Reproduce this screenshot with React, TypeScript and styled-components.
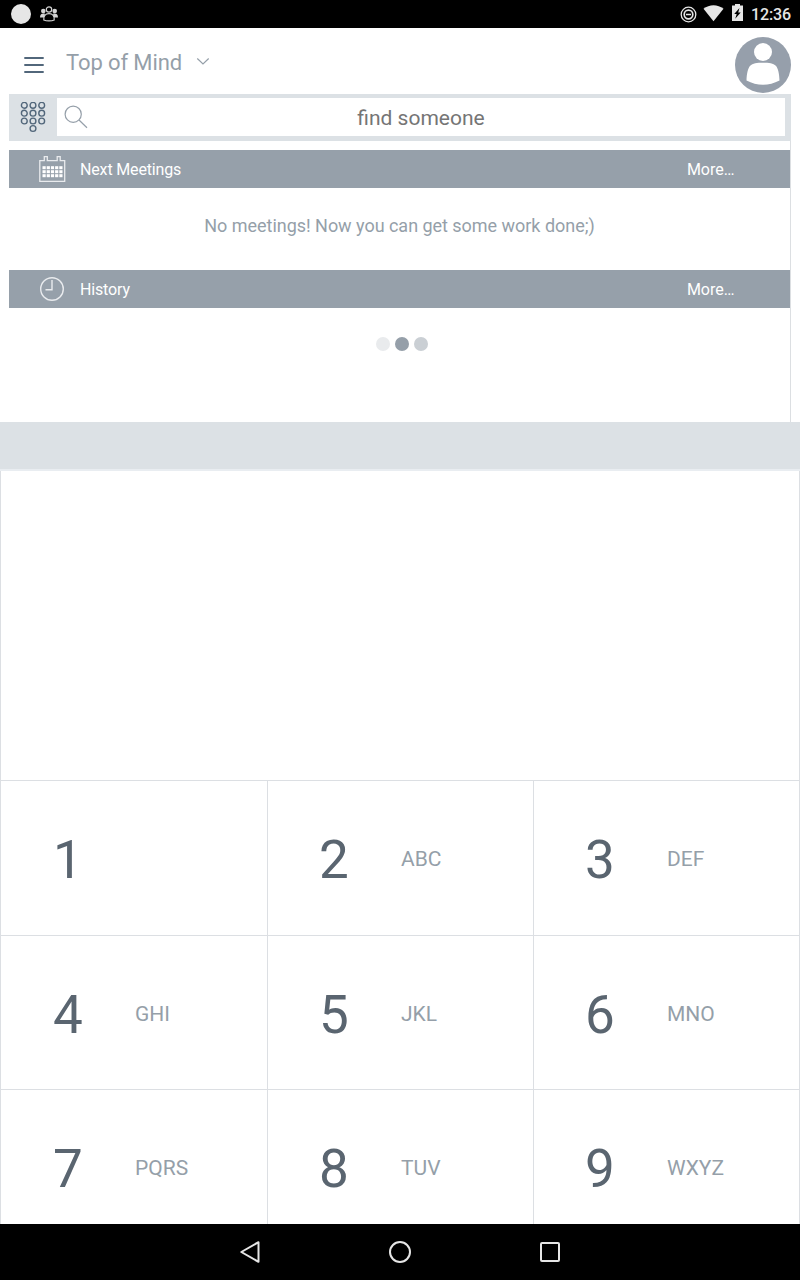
import React from "react";
import styled, { createGlobalStyle } from "styled-components";

const GlobalStyle = createGlobalStyle`
  * { box-sizing: border-box; }
  html, body { margin: 0; padding: 0; background: #fff; overflow: hidden; }
  body { font-family: Roboto, "Liberation Sans", sans-serif; }
  svg { display: block; flex: none; }
`;

const Screen = styled.div`
  width: 800px;
  height: 1280px;
  display: flex;
  flex-direction: column;
  background: #fff;
  overflow: hidden;
`;

const StatusBar = styled.div`
  flex: none;
  height: 28px;
  display: flex;
  justify-content: space-between;
  background: #000;
`;

const Clock = styled.span`
  font-size: 16px;
  font-weight: 500;
  letter-spacing: -0.15px;
  line-height: 29px;
  color: #e6e6e6;
  width: 49px;
`;

const StatusGroup = styled.div`
  display: flex;
`;

const Header = styled.header`
  flex: none;
  height: 66px;
  display: flex;
  padding: 9px 9px 0 24px;
`;

const MenuButton = styled.div`
  width: 42px;
  padding-top: 19px;
`;

const Title = styled.h1`
  margin: 0;
  width: 129px;
  font-size: 22px;
  font-weight: 400;
  letter-spacing: -0.1px;
  line-height: 26px;
  padding-top: 13px;
  color: #959fa9;
  white-space: nowrap;
`;

const Chevron = styled.div`
  padding-top: 20px;
`;

const Avatar = styled.div`
  margin-left: auto;
`;

const Content = styled.main`
  flex: none;
  height: 328px;
  width: 782px;
  margin-left: 9px;
  display: flex;
  flex-direction: column;
`;

const SearchBar = styled.div`
  height: 47px;
  flex: none;
  display: flex;
  padding: 4px 6px 5px 0;
  background: #dce1e5;
`;

const DialToggle = styled.div`
  width: 48px;
  padding: 4px 0 0 11px;
`;

const SearchField = styled.div`
  flex: 1;
  display: flex;
  padding: 7px 0 0 7px;
  background: #fff;
`;

const Placeholder = styled.span`
  flex: 1;
  margin-right: 31px;
  margin-top: 1px;
  text-align: center;
  font-size: 21px;
  line-height: 24px;
  color: #757575;
`;

const Feed = styled.div`
  flex: 1;
  padding-top: 9px;
  border-right: 1px solid #dcdfe2;
`;

const SectionBar = styled.div`
  height: 38px;
  display: flex;
  align-items: center;
  padding: 0 56px 0 30px;
  background: #96a0aa;
  color: #fff;
  font-size: 16px;
  line-height: 36px;
`;

const SectionTitle = styled.span`
  margin-left: 14px;
  padding-top: 2px;
  letter-spacing: -0.15px;
`;

const More = styled.span`
  margin-left: auto;
  padding-top: 2px;
`;

const Ellipsis = styled.span`
  letter-spacing: -0.8px;
`;

const EmptyMessage = styled.p`
  margin: 0;
  height: 82px;
  line-height: 76px;
  text-align: center;
  font-size: 18px;
  letter-spacing: -0.03px;
  color: #959fa9;
`;

const Loader = styled.div`
  display: flex;
  gap: 5px;
  padding: 29px 0 0 367px;
`;

const Dot = styled.i<{ $color: string }>`
  width: 14px;
  height: 14px;
  border-radius: 50%;
  background: ${(p) => p.$color};
`;

const Band = styled.div`
  flex: none;
  height: 49px;
  background: #dce1e5;
  border-bottom: 2px solid #e9edf1;
`;

const Dialer = styled.section`
  flex: 1;
  min-height: 0;
  display: flex;
  flex-direction: column;
  border: solid #dcdfe3;
  border-width: 0 1px;
  overflow: hidden;
`;

const NumberDisplay = styled.div`
  flex: none;
  height: 309px;
`;

const KeyGrid = styled.div`
  display: grid;
  grid-template-columns: 266px 266px 266px;
  grid-template-rows: 155px 154px 154px;
`;

const Key = styled.div<{ $last: boolean }>`
  display: grid;
  grid-template-columns: 133px 1fr;
  border-top: 1px solid #dcdfe3;
  border-right: ${(p) => (p.$last ? "0" : "1px solid #dcdfe3")};
  width: ${(p) => (p.$last ? "266px" : "267px")};
`;

const Digit = styled.span`
  text-align: center;
  font-size: 53px;
  line-height: 64px;
  padding: 47px 0 0 1px;
  color: #5a6570;
`;

const Letters = styled.span`
  padding: 65px 0 0 1px;
  font-size: 21px;
  line-height: 26px;
  color: #959fa9;
`;

const NavBar = styled.nav`
  flex: none;
  height: 56px;
  display: flex;
  justify-content: center;
  align-items: center;
  gap: 126px;
  background: #000;
`;

const keys = [
  ["1", ""], ["2", "ABC"], ["3", "DEF"],
  ["4", "GHI"], ["5", "JKL"], ["6", "MNO"],
  ["7", "PQRS"], ["8", "TUV"], ["9", "WXYZ"],
];

const NotificationIcons = () => (
  <svg width="70" height="28" fill="none">
    <circle cx="21" cy="14" r="10" fill="#e6e6e6" />
    <g fill="#d4d4d4">
      <circle cx="43.3" cy="11" r="2.3" />
      <circle cx="54.7" cy="11" r="2.3" />
      <path d="M40 17.5c0-2.7 1.2-4 3.3-4h1.5v4zM58 17.5c0-2.7-1.2-4-3.3-4h-1.5v4z" />
    </g>
    <circle cx="49" cy="9.5" r="2.7" fill="#000" stroke="#d4d4d4" strokeWidth="1.2" />
    <path d="M43.8 20c-.5-4 1.5-6.3 5.2-6.3s5.7 2.3 5.2 6.3c-2.7 1.3-7.7 1.3-10.4 0z" fill="#000" stroke="#d4d4d4" strokeWidth="1.2" />
  </svg>
);

const SystemIcons = () => (
  <svg width="72" height="28" fill="none">
    <circle cx="9.5" cy="14.5" r="7.3" stroke="#e6e6e6" strokeWidth="1.3" />
    <circle cx="9.5" cy="14.5" r="4.3" stroke="#e6e6e6" strokeWidth="1.7" />
    <path d="M7 14.5h5" stroke="#e6e6e6" strokeWidth="1.5" />
    <path d="M24.500 8.800c5.800-4.800 14.200-4.800 20 0L34.500 21.300z" fill="#e6e6e6" />
    <path d="M56 4h5v1.500h3V21H53V5.500h3z" fill="#e6e6e6" />
    <path d="M60.500 8l-5.300 6h2.500l-1.500 4.700 5.500-6.200h-2.500z" fill="#000" />
  </svg>
);

const MenuIcon = () => (
  <svg width="20" height="18" stroke="#52677b" strokeWidth="2">
    <path d="M.3 2h19.4M.3 9h19.4M.3 16h19.4" />
  </svg>
);

const ChevronIcon = () => (
  <svg width="16" height="9" fill="none" stroke="#959fa9" strokeWidth="1.2">
    <path d="M2.300 1.500L8 7l5.700-5.500" />
  </svg>
);

const AvatarIcon = () => (
  <svg width="56" height="56" fill="#fff">
    <circle cx="28" cy="28" r="28" fill="#969fab" />
    <circle cx="28" cy="15" r="9" />
    <path d="M11.500 43.500c.3-7 1.300-12 3.700-14.700C17.600 26 22 25.700 28 25.700s10.400.3 12.800 3.100c2.400 2.700 3.400 7.700 3.700 14.700C34 49.200 22 49.200 11.500 43.500z" />
  </svg>
);

const DialpadIcon = () => (
  <svg width="26" height="32" fill="none" stroke="#52677b" strokeWidth="1.4">
    {[3.3, 11.2, 19].flatMap((y) =>
      [4.3, 13, 21.7].map((x) => <circle key={`${x}-${y}`} cx={x} cy={y} r="2.9" />)
    )}
    <circle cx="13" cy="26.500" r="2.9" />
  </svg>
);

const SearchIcon = () => (
  <svg width="24" height="24" fill="none" stroke="#959fa9" strokeWidth="1.2">
    <circle cx="9.2" cy="9.200" r="8.1" />
    <path d="M15 15l8 7.700" />
  </svg>
);

const CalendarIcon = () => (
  <svg width="27" height="28" fill="none" stroke="#e9ebee" strokeWidth="1.3">
    <path d="M.8 26.300V5.700h4.500V1.700h3v4h9.900v-4h3v4h4.500v20.600z" />
    <g fill="#fff" stroke="none">
      {[11.2, 15.2, 19.2].flatMap((y) =>
        [3.5, 7.7, 11.9, 16.1, 20.3].map((x) => (
          <rect key={`${x}-${y}`} x={x} y={y} width="3.2" height="3" />
        ))
      )}
    </g>
  </svg>
);

const ClockIcon = () => (
  <svg width="27" height="26" fill="none" stroke="#e9ebee" strokeWidth="1.4">
    <circle cx="13" cy="13" r="11.3" />
    <path d="M13 4v9.700H6.500" />
  </svg>
);

export default function App() {
  return (
    <Screen>
      <GlobalStyle />
      <StatusBar>
        <NotificationIcons />
        <StatusGroup>
          <SystemIcons />
          <Clock>12:36</Clock>
        </StatusGroup>
      </StatusBar>
      <Header>
        <MenuButton><MenuIcon /></MenuButton>
        <Title>Top of Mind</Title>
        <Chevron><ChevronIcon /></Chevron>
        <Avatar><AvatarIcon /></Avatar>
      </Header>
      <Content>
        <SearchBar>
          <DialToggle><DialpadIcon /></DialToggle>
          <SearchField>
            <SearchIcon />
            <Placeholder>find someone</Placeholder>
          </SearchField>
        </SearchBar>
        <Feed>
          <SectionBar>
            <CalendarIcon />
            <SectionTitle>Next Meetings</SectionTitle>
            <More>More<Ellipsis>...</Ellipsis></More>
          </SectionBar>
          <EmptyMessage>No meetings! Now you can get some work done;)</EmptyMessage>
          <SectionBar>
            <ClockIcon />
            <SectionTitle>History</SectionTitle>
            <More>More<Ellipsis>...</Ellipsis></More>
          </SectionBar>
          <Loader>
            <Dot $color="#e9ebed" />
            <Dot $color="#959fa9" />
            <Dot $color="#cacfd4" />
          </Loader>
        </Feed>
      </Content>
      <Band />
      <Dialer>
        <NumberDisplay />
        <KeyGrid>
          {keys.map(([digit, letters], i) => (
            <Key key={digit} $last={i % 3 === 2}>
              <Digit>{digit}</Digit>
              <Letters>{letters}</Letters>
            </Key>
          ))}
        </KeyGrid>
      </Dialer>
      <NavBar>
        <svg width="24" height="24" fill="none" stroke="#e6e6e6" strokeWidth="2" strokeLinejoin="round">
          <path d="M20.500 2.200v19.600L3.300 12z" />
        </svg>
        <svg width="24" height="24" fill="none" stroke="#e6e6e6" strokeWidth="2">
          <circle cx="12" cy="12" r="10" />
        </svg>
        <svg width="24" height="24" fill="none" stroke="#e6e6e6" strokeWidth="2">
          <rect x="3" y="3" width="18" height="18" rx="1" />
        </svg>
      </NavBar>
    </Screen>
  );
}
